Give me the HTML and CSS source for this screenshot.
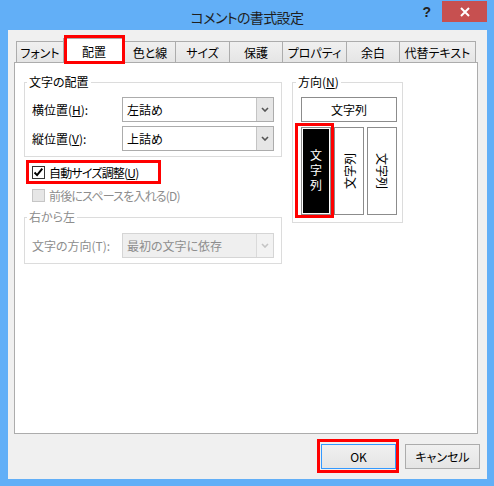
FILE: index.html
```html
<!DOCTYPE html>
<html lang="ja">
<head>
<meta charset="utf-8">
<title>コメントの書式設定</title>
<link rel="stylesheet" href="styles.css">
</head>
<body>
<div class="window">
  <div class="titlebar">
    <div></div>
    <div class="title">コメントの書式設定</div>
    <div class="controls">
      <span class="help">?</span>
      <span class="close"><svg width="10" height="10" viewBox="0 0 10 10"><path d="M1 1l8 8M9 1l-8 8" stroke="#fff" stroke-width="2"/></svg></span>
    </div>
  </div>
  <div class="client">
    <div class="tabs">
      <div class="tab t1">フォント</div>
      <div class="tab t2 active">配置</div>
      <div class="tab t3">色と線</div>
      <div class="tab t4">サイズ</div>
      <div class="tab t5">保護</div>
      <div class="tab t6">プロパティ</div>
      <div class="tab t7">余白</div>
      <div class="tab t8">代替テキスト</div>
    </div>
    <div class="panel">
      <div class="leftcol">
        <fieldset class="group g1">
          <legend>文字の配置</legend>
          <div class="row">
            <label>横位置(<u>H</u>):</label>
            <div class="select"><span class="val">左詰め</span><span class="arrow"><svg width="8" height="5" viewBox="0 0 8 5"><path d="M1 1l3 3 3-3" fill="none" stroke="#555" stroke-width="1.6"/></svg></span></div>
          </div>
          <div class="row">
            <label>縦位置(<u>V</u>):</label>
            <div class="select"><span class="val">上詰め</span><span class="arrow"><svg width="8" height="5" viewBox="0 0 8 5"><path d="M1 1l3 3 3-3" fill="none" stroke="#555" stroke-width="1.6"/></svg></span></div>
          </div>
        </fieldset>
        <div class="check hl">
          <span class="box"><svg width="11" height="11" viewBox="0 0 11 11"><path d="M1.5 5.5l2.6 2.6 5.2-6.4" fill="none" stroke="#000" stroke-width="2"/></svg></span>
          <span class="clabel">自動サイズ調整(<u>U</u>)</span>
        </div>
        <div class="check dis">
          <span class="box"></span>
          <span class="clabel">前後にスペースを入れる(D)</span>
        </div>
        <fieldset class="group g2">
          <legend>右から左</legend>
          <div class="row">
            <label>文字の方向(T):</label>
            <div class="select dis"><span class="val">最初の文字に依存</span><span class="arrow"><svg width="8" height="5" viewBox="0 0 8 5"><path d="M1 1l3 3 3-3" fill="none" stroke="#c4c4c4" stroke-width="1.6"/></svg></span></div>
          </div>
        </fieldset>
      </div>
      <fieldset class="group dir">
        <legend>方向(<u>N</u>)</legend>
        <div class="hbtn">文字列</div>
        <div class="vrow">
          <div class="vbtn sel"><div class="ink"><span class="vt">文字列</span></div></div>
          <div class="vbtn"><span class="side up">文字列</span></div>
          <div class="vbtn"><span class="side">文字列</span></div>
        </div>
      </fieldset>
    </div>
    <div class="footer">
      <button class="btn ok">OK</button>
      <button class="btn">キャンセル</button>
    </div>
  </div>
</div>
</body>
</html>
```

FILE: styles.css
```css
* { box-sizing: border-box; }
html, body { margin: 0; padding: 0; }
body {
  width: 494px;
  height: 486px;
  overflow: hidden;
  font-family: "Noto Sans CJK JP", "Noto Sans", sans-serif;
  font-size: 12px;
  font-feature-settings: "palt";
  color: #000;
}
.window {
  width: 494px;
  height: 486px;
  background: #62aff7;
  display: flex;
  flex-direction: column;
}
.titlebar {
  height: 30px;
  display: grid;
  grid-template-columns: 1fr auto 1fr;
  align-items: start;
}
.title {
  font-size: 14px;
  letter-spacing: -0.6px;
  line-height: 28px;
  padding-top: 3px;
  color: #1f1f1f;
  white-space: nowrap;
}
.controls {
  display: flex;
  justify-content: flex-end;
  align-items: flex-start;
}
.help {
  font-family: "Liberation Sans", sans-serif;
  font-weight: bold;
  font-size: 14px;
  line-height: 14px;
  margin-top: 5px;
  margin-right: 11px;
  color: #222;
}
.close {
  width: 45px;
  height: 21px;
  margin-top: 1px;
  margin-right: 7px;
  background: #c75050;
  display: flex;
  align-items: center;
  justify-content: center;
}
.client {
  flex: 1;
  margin: 0 7px 7px 8px;
  background: #f0f0f0;
  padding: 8px 0 0 6px;
  display: flex;
  flex-direction: column;
}
.tabs {
  display: flex;
  align-items: flex-end;
  height: 24px;
  padding-left: 2px;
}
.tab {
  height: 21px;
  border: 1px solid #acacac;
  border-bottom: none;
  background: linear-gradient(#f0f0f0, #e5e5e5);
  display: flex;
  align-items: center;
  justify-content: center;
  white-space: nowrap;
  margin-left: -1px;
}
.tab:first-child { margin-left: 0; }
.t1 { width: 48px; }
.t2 { width: 62px; }
.t3 { width: 52px; }
.t4 { width: 55px; }
.t5 { width: 54px; }
.t6 { width: 65px; }
.t7 { width: 54px; }
.t8 { width: 77px; }
.tab.active {
  height: 25px;
  margin-bottom: -1px;
  background: #fff;
  position: relative;
  z-index: 1;
}
.tab.active::after {
  content: "";
  position: absolute;
  left: 0;
  right: -1px;
  top: -4px;
  bottom: -1px;
  border: 3px solid #f00;
}
.panel {
  flex: none;
  height: 372px;
  margin-right: 9px;
  border: 1px solid #acacac;
  background: #fff;
  padding: 11px 0 0 9px;
  display: grid;
  grid-template-columns: 258px 111px;
  column-gap: 10px;
  align-items: start;
}
.leftcol {
  display: flex;
  flex-direction: column;
}
fieldset.group {
  margin: 0;
  min-width: 0;
  border: 1px solid #dcdcdc;
  padding: 7px 7px 5px 7px;
}
legend {
  padding: 0 2px;
  margin-left: -5px;
  line-height: 16px;
}
.row {
  display: flex;
  align-items: center;
}
.row + .row { margin-top: 4px; }
.row label {
  width: 90px;
  white-space: nowrap;
}
.select {
  width: 152px;
  height: 25px;
  border: 1px solid #acacac;
  background: #fff;
  display: flex;
  align-items: center;
}
.select .val {
  flex: 1;
  padding-left: 4px;
  white-space: nowrap;
}
.select .arrow {
  width: 17px;
  height: 23px;
  background: #e6e6e6;
  border-left: 1px solid #c4c4c4;
  display: flex;
  align-items: center;
  justify-content: center;
}
.select.dis {
  background: #efefef;
  border-color: #d5d5d5;
  color: #8d8d8d;
}
.select.dis .arrow {
  background: #f2f2f2;
  border-left-color: #dadada;
}
.check {
  position: relative;
  display: flex;
  align-items: center;
  gap: 4px;
  height: 20px;
  padding-left: 8px;
  white-space: nowrap;
}
.clabel { letter-spacing: -0.8px; }
.check.hl { margin-top: 5px; }
.check.hl::after {
  content: "";
  position: absolute;
  left: 2px;
  width: 129px;
  top: -2px;
  bottom: -2px;
  border: 3px solid #f00;
}
.check.dis {
  margin-top: 3px;
  color: #8d8d8d;
}
.box {
  width: 13px;
  height: 13px;
  border: 1px solid #333;
  background: #fff;
  display: flex;
  align-items: center;
  justify-content: center;
}
.check.dis .box {
  border-color: #c6c6c6;
  background: #e6e6e6;
}
fieldset.g2 {
  margin-top: 4px;
  padding-top: 8px;
  color: #8d8d8d;
}
fieldset.dir {
  padding: 7px 5px 7px 8px;
}
.hbtn {
  height: 25px;
  border: 1px solid #8c8c8c;
  background: #fff;
  display: flex;
  align-items: center;
  justify-content: center;
}
.vrow {
  display: flex;
  gap: 3px;
  margin-top: 5px;
}
.vbtn {
  width: 30px;
  height: 88px;
  border: 1px solid #8c8c8c;
  background: #fff;
  display: flex;
  align-items: center;
  justify-content: center;
}
.vbtn.sel {
  padding: 1px;
  position: relative;
}
.vbtn.sel::after {
  content: "";
  position: absolute;
  left: -7px;
  right: -4px;
  top: -5px;
  bottom: -4px;
  border: 3px solid #f00;
}
.ink {
  width: 100%;
  height: 100%;
  background: #000;
  color: #fff;
  display: flex;
  align-items: center;
  justify-content: center;
}
.vt {
  writing-mode: vertical-rl;
  letter-spacing: 3px;
  font-feature-settings: normal;
}
.side {
  writing-mode: vertical-rl;
  text-orientation: sideways;
}
.side.up { transform: rotate(180deg); }
.footer {
  flex: 1;
  display: flex;
  justify-content: flex-end;
  align-items: flex-start;
  gap: 9px;
  padding: 10px 7px 0 0;
}
.btn {
  width: 75px;
  height: 25px;
  padding: 0;
  border: 1px solid #acacac;
  background: linear-gradient(#f0f0f0, #e5e5e5);
  font: inherit;
  color: #000;
}
.btn.ok {
  border-color: #3399ff;
  position: relative;
}
.btn.ok::after {
  content: "";
  position: absolute;
  left: -5px;
  right: -4px;
  top: -6px;
  bottom: -5px;
  border: 3px solid #f00;
}
```
